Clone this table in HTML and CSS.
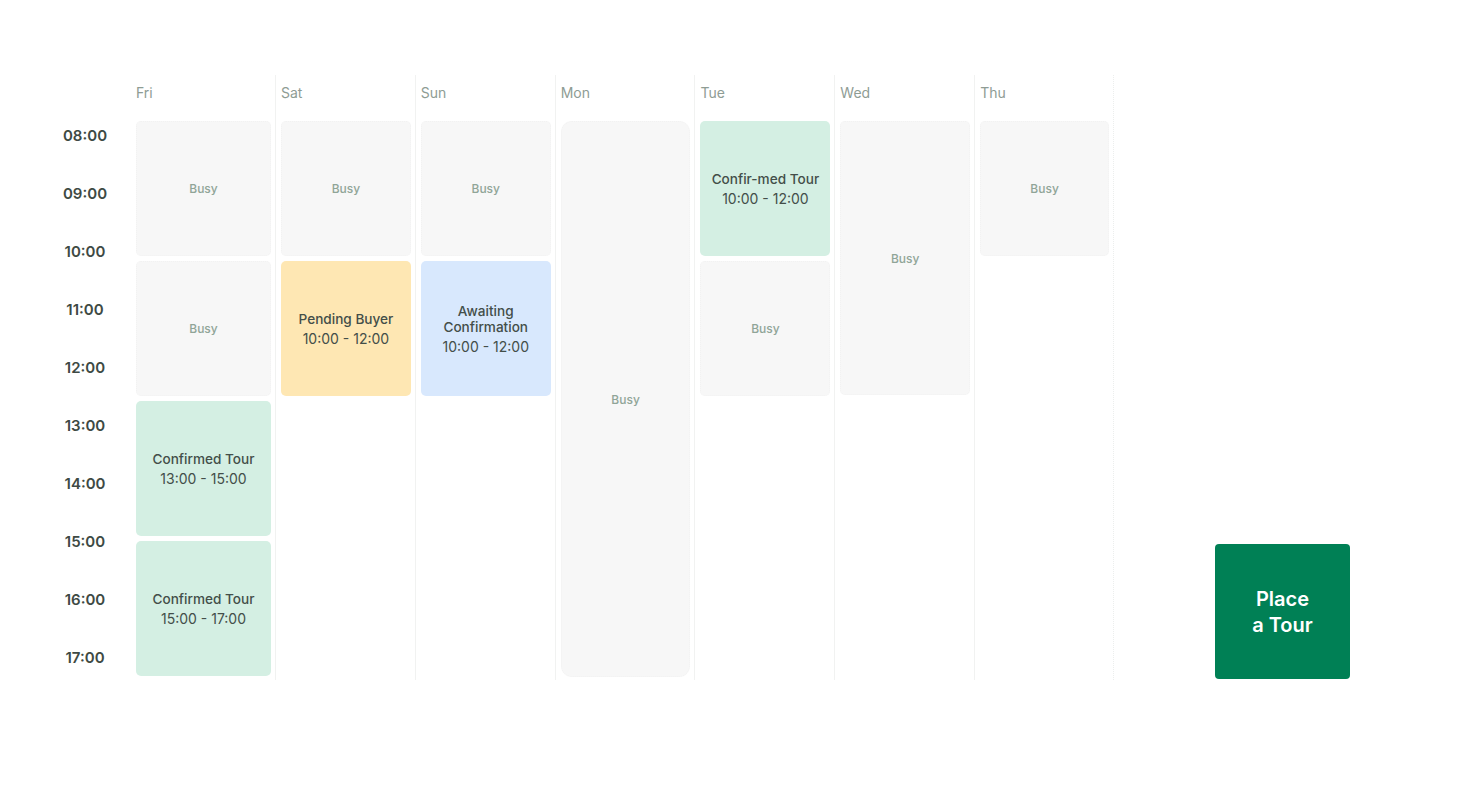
FILE: index.html
```html
<!DOCTYPE html>
<html lang="en">
<head>
<meta charset="utf-8">
<title>Tour Calendar</title>
<link rel="stylesheet" href="styles.css">
</head>
<body>
<div class="page">
  <div class="calendar">
    <div class="times">
      <div class="time">08:00</div>
      <div class="time">09:00</div>
      <div class="time">10:00</div>
      <div class="time">11:00</div>
      <div class="time">12:00</div>
      <div class="time">13:00</div>
      <div class="time">14:00</div>
      <div class="time">15:00</div>
      <div class="time">16:00</div>
      <div class="time">17:00</div>
    </div>
    <div class="day day-first">
      <div class="day-name">Fri</div>
      <div class="slots">
        <div class="ev busy h2">Busy</div>
        <div class="ev busy h2">Busy</div>
        <div class="ev confirmed h2"><div class="ev-title">Confirmed Tour</div><div class="ev-time">13:00 - 15:00</div></div>
        <div class="ev confirmed h2"><div class="ev-title">Confirmed Tour</div><div class="ev-time">15:00 - 17:00</div></div>
      </div>
    </div>
    <div class="day">
      <div class="day-name">Sat</div>
      <div class="slots">
        <div class="ev busy h2">Busy</div>
        <div class="ev pending h2"><div class="ev-title">Pending Buyer</div><div class="ev-time">10:00 - 12:00</div></div>
      </div>
    </div>
    <div class="day">
      <div class="day-name">Sun</div>
      <div class="slots">
        <div class="ev busy h2">Busy</div>
        <div class="ev awaiting h2"><div class="ev-title">Awaiting<br>Confirmation</div><div class="ev-time">10:00 - 12:00</div></div>
      </div>
    </div>
    <div class="day">
      <div class="day-name">Mon</div>
      <div class="slots">
        <div class="ev busy h8 round">Busy</div>
      </div>
    </div>
    <div class="day">
      <div class="day-name">Tue</div>
      <div class="slots">
        <div class="ev confirmed h2"><div class="ev-title">Confir-med Tour</div><div class="ev-time">10:00 - 12:00</div></div>
        <div class="ev busy h2">Busy</div>
      </div>
    </div>
    <div class="day">
      <div class="day-name">Wed</div>
      <div class="slots">
        <div class="ev busy h4">Busy</div>
      </div>
    </div>
    <div class="day day-last">
      <div class="day-name">Thu</div>
      <div class="slots">
        <div class="ev busy h2">Busy</div>
      </div>
    </div>
  </div>
  <button class="place-btn">Place<br>a Tour</button>
</div>
</body>
</html>
```

FILE: styles.css
```css
* { box-sizing: border-box; }
html, body {
  margin: 0;
  padding: 0;
  background: #ffffff;
  font-family: Inter, "Noto Sans", "Liberation Sans", sans-serif;
}
.page {
  display: flex;
  align-items: flex-start;
  padding-top: 75px;
  width: 1468px;
  height: 788px;
}
.calendar {
  display: flex;
  align-items: stretch;
}
.times {
  width: 136px;
  padding-left: 56px;
  padding-top: 31px;
}
.time {
  width: 58px;
  height: 58.1px;
  display: flex;
  align-items: center;
  justify-content: center;
  font-size: 15px;
  font-weight: 600;
  color: #3e4a44;
}
.day {
  width: 139.83px;
  border-left: 1px solid #f1f2f1;
  padding: 0 4px 0 5px;
  height: 605px;
}
.day-first {
  width: 139px;
  border-left: none;
  padding-left: 0;
}
.day-last {
  border-right: 1px dotted #eceeed;
}
.day-name {
  height: 46px;
  padding-top: 9px;
  font-size: 14px;
  line-height: 17px;
  color: #8e9c94;
}
.slots {
  display: flex;
  flex-direction: column;
  gap: 5px;
}
.ev {
  width: 100%;
  border-radius: 5px;
  display: flex;
  flex-direction: column;
  align-items: center;
  justify-content: center;
  text-align: center;
}
.h2 { height: 135px; }
.h4 { height: 274px; }
.h8 { height: 556px; }
.round { border-radius: 11px; }
.busy {
  background: #f7f7f7;
  border: 1px dotted #f2f2f2;
  color: #90a598;
  font-size: 12px;
  font-weight: 500;
}
.confirmed { background: #d4efe3; }
.pending { background: #fee7b3; }
.awaiting { background: #d8e8fd; }
.ev-title {
  font-size: 13.6px;
  line-height: 16px;
  font-weight: 500;
  color: #434e49;
}
.ev-time {
  margin-top: 4px;
  font-size: 14px;
  line-height: 16px;
  color: #434e49;
}
.place-btn {
  align-self: flex-start;
  margin-top: 469px;
  margin-left: 101px;
  width: 135px;
  height: 135px;
  border: none;
  border-radius: 4px;
  background: #008055;
  color: #ffffff;
  font-family: Inter, "Noto Sans", "Liberation Sans", sans-serif;
  font-size: 20px;
  font-weight: 600;
  line-height: 26px;
  padding: 0;
  cursor: pointer;
}
```
